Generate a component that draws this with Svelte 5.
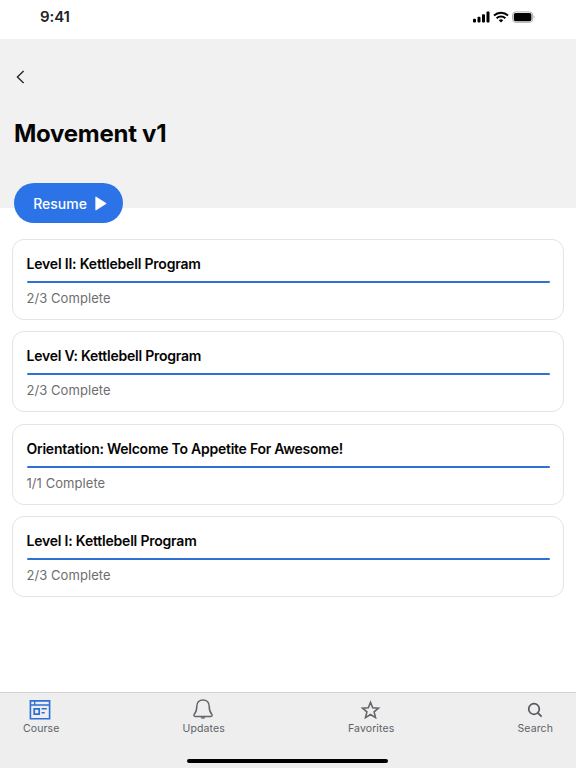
<script lang="ts">
	const courses = [
		{title: 'Level II: Kettlebell Program', done: 2, total: 3, spacing: -0.19},
		{title: 'Level V: Kettlebell Program', done: 2, total: 3, spacing: -0.24},
		{title: 'Orientation: Welcome To Appetite For Awesome!', done: 1, total: 1, spacing: -0.25},
		{title: 'Level I: Kettlebell Program', done: 2, total: 3, spacing: -0.21}
	];
</script>

<div class="screen">
	<div class="status">
		<time>9:41</time>
		<div class="indicators">
			<svg width="17" height="12" viewBox="0 0 17 12">
				<rect x="0" y="7.8" width="3" height="3.7" rx="0.9" />
				<rect x="4.5" y="5.8" width="3" height="5.7" rx="0.9" />
				<rect x="9" y="3.2" width="3" height="8.3" rx="0.9" />
				<rect x="13.5" y="0.6" width="3" height="10.9" rx="0.9" />
			</svg>
			<svg width="16" height="12" viewBox="0 0 16 12">
				<path d="M1 4.5a10.2 10.2 0 0 1 14 0M3.6 7.2a6.5 6.5 0 0 1 8.8 0" fill="none" stroke="#000" stroke-width="2" />
				<path d="M5.8 9.2a3.4 3.4 0 0 1 4.4 0L8 11.5z" />
			</svg>
			<svg width="23" height="12" viewBox="0 0 23 12">
				<rect x="0.6" y="0.9" width="20" height="10.4" rx="3" fill="#fff" stroke="#aaa" />
				<rect x="1.8" y="2" width="17.6" height="8.2" rx="1.8" />
				<path d="M21.6 4.3v3.5c1.3-.6 1.3-2.9 0-3.5z" fill="#aaa" />
			</svg>
		</div>
	</div>

	<header>
		<button class="back" aria-label="Back">
			<svg width="9" height="14" viewBox="0 0 9 14">
				<path d="M7.6 1 1.4 7l6.2 6" fill="none" stroke="#222" stroke-width="1.3" />
			</svg>
		</button>
		<h1>Movement v1</h1>
		<button class="resume">
			<span>Resume</span>
			<svg width="12" height="15" viewBox="0 0 12 15">
				<path d="M.8.9v13.2L11.2 7.5z" fill="#fff" stroke="#fff" stroke-width="0.8" stroke-linejoin="round" />
			</svg>
		</button>
	</header>

	<main>
		{#each courses as course}
			<article>
				<h2 style="letter-spacing: {course.spacing}px">{course.title}</h2>
				<div class="bar"></div>
				<p>{course.done}/{course.total} Complete</p>
			</article>
		{/each}
	</main>

	<footer>
		<nav>
			<a href="#course">
				<svg class="course" width="22" height="22" viewBox="0 0 22 22" fill="none" stroke="#2b6fd8">
					<path d="M1.4 1.9h19.2v17.8H1.4zM1.4 6h19.2" stroke-width="1.6" />
					<path d="M5.7 2v4" stroke-width="1.3" />
					<path d="M5.2 9.8h5v5.4h-5z" stroke-width="1.7" />
					<path d="M12.6 9.8h5.2M12.6 13.7h3.1" stroke-width="1.6" />
				</svg>
				<span>Course</span>
			</a>
			<a href="#updates">
				<svg class="updates" width="22" height="22" viewBox="0 0 22 22" fill="none" stroke="#63656a" stroke-width="1.5">
					<path
						d="M11 .9C7 .9 4.8 3.8 4.8 7.3c0 4.7-.9 6.1-2.4 7.7-.9 1-.8 2.6 1 2.6h15.2c1.8 0 1.9-1.6 1-2.6-1.5-1.6-2.4-3-2.4-7.7C17.2 3.8 15 .9 11 .9z"
					/>
					<path d="M8.5 18.3a2.6 2.1 0 0 0 5 0z" fill="#63656a" stroke="none" />
				</svg>
				<span>Updates</span>
			</a>
			<a href="#favorites">
				<svg width="22" height="22" viewBox="0 0 22 22" fill="none" stroke="#63656a" stroke-width="1.6">
					<path
						d="m10.5 3.3 2.2 5.4 5.8.4-4.4 3.8 1.4 5.7-5-3.1-5 3.1 1.4-5.7-4.4-3.8 5.8-.4z"
					/>
				</svg>
				<span>Favorites</span>
			</a>
			<a href="#search">
				<svg width="22" height="22" viewBox="0 0 22 22" fill="none" stroke="#55575c" stroke-width="1.7">
					<circle cx="10" cy="10" r="5.3" />
					<path d="m13.8 13.8 3.8 3.8" />
				</svg>
				<span>Search</span>
			</a>
		</nav>
		<div class="home"></div>
	</footer>
</div>

<style>
	:global(body) {
		background: #fff;
	}

	.screen {
		box-sizing: border-box;
		color: #050505;
		display: flex;
		flex-direction: column;
		font-family: Inter, sans-serif;
		height: 768px;
		overflow: hidden;
		width: 576px;
	}

	.status {
		box-sizing: border-box;
		display: flex;
		flex: none;
		height: 39px;
		justify-content: space-between;
		padding: 8px 41px 0 40px;
	}

	time {
		color: #222;
		font-size: 15px;
		font-weight: 600;
		letter-spacing: -0.1px;
		line-height: 17px;
	}

	.indicators {
		display: flex;
		gap: 3px;
		padding-top: 3px;
	}

	header {
		align-items: flex-start;
		background: #f1f1f1;
		box-sizing: border-box;
		display: flex;
		flex: none;
		flex-direction: column;
		height: 169px;
		padding: 31px 14px 0;
	}

	button {
		border: 0;
		font-family: inherit;
	}

	.back {
		background: none;
		height: 14px;
		margin-left: 2px;
		padding: 0;
	}

	.back svg {
		display: block;
	}

	h1 {
		font-size: 24px;
		font-weight: 700;
		letter-spacing: -0.27px;
		line-height: 30px;
		margin: 35px 0 34px;
	}

	.resume {
		align-items: center;
		background: #2b73e6;
		border-radius: 20px;
		color: #fff;
		display: flex;
		flex: none;
		font-size: 14px;
		font-weight: 500;
		gap: 8px;
		height: 40px;
		justify-content: center;
		padding: 0 0 0 3px;
		width: 109px;
	}

	main {
		display: flex;
		flex: 1;
		flex-direction: column;
		gap: 11.3px;
		padding: 31px 12px 0;
	}

	article {
		border: 1px solid #e4e4e4;
		border-radius: 12px;
		box-sizing: border-box;
		height: 81px;
		padding: 14px 13.5px 0;
	}

	h2 {
		font-size: 14px;
		font-weight: 600;
		line-height: 20px;
		margin: 0;
		white-space: nowrap;
	}

	.bar {
		background: #2f70d6;
		border-radius: 1px;
		height: 2px;
		margin-top: 7px;
	}

	p {
		color: #6e6e70;
		font-size: 13px;
		letter-spacing: 0.06px;
		line-height: 18px;
		margin: 6px 0 0;
	}

	footer {
		align-items: center;
		background: #eee;
		border-top: 1px solid #d2d2d2;
		box-sizing: border-box;
		display: flex;
		flex: none;
		flex-direction: column;
		height: 76px;
	}

	nav {
		align-self: stretch;
		display: flex;
		justify-content: space-between;
		padding: 6px 23px 0;
	}

	a {
		align-items: center;
		color: #606267;
		display: flex;
		flex-direction: column;
		font-size: 10.5px;
		letter-spacing: 0.1px;
		line-height: 14px;
		text-decoration: none;
	}

	nav svg {
		display: block;
		margin-bottom: 1px;
	}

	.course {
		margin-right: 2px;
	}

	.updates {
		margin-right: 1px;
	}

	.home {
		background: #000;
		border-radius: 3px;
		height: 4px;
		margin-right: 1px;
		margin-top: 23px;
		width: 201px;
	}
</style>
